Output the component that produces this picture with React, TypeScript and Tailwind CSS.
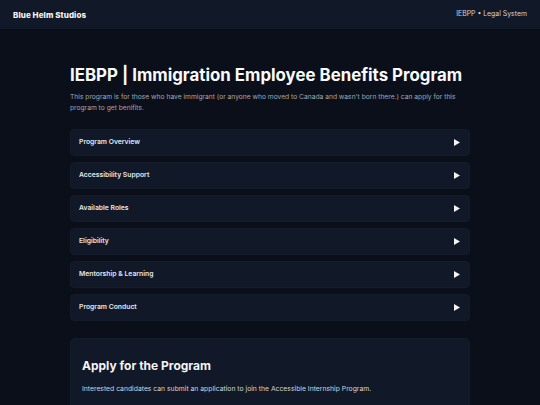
import React from "react";

const items = [
  "Program Overview",
  "Accessibility Support",
  "Available Roles",
  "Eligibility",
  "Mentorship & Learning",
  "Program Conduct",
];

export default function App() {
  return (
    <div
      className="min-h-[405px] bg-[#0b0f19] text-white"
      style={{ fontFamily: "Inter, 'Noto Sans', sans-serif" }}
    >
      <header className="h-[30px] bg-[#111827] border-b border-[#0a0d16] flex items-center justify-between px-[13px]">
        <div className="text-[8px] font-extrabold text-[#f3f4f6] tracking-[0.01em]">Blue Helm Studios</div>
        <div className="text-[6.9px] text-[#d1d5db]">IEBPP • Legal System</div>
      </header>
      <main className="w-[400px] mx-auto pt-[34px]">
        <h1 className="text-[16.85px] leading-[22px] font-bold text-[#f9fafb]">
          IEBPP | Immigration Employee Benefits Program
        </h1>
        <p className="mt-[6px] text-[6.7px] leading-[11px] text-[#a3a8b3] pr-[6px]">
          This program is for those who have immigrant (or anyone who moved to Canada and wasn't born there.) can apply for this program to get benifits.
        </p>
        <div className="mt-[15px] flex flex-col gap-[6px]">
          {items.map((t) => (
            <div
              key={t}
              className="h-[27px] rounded-[4px] bg-[#111827] border border-[#141b2b] flex items-center justify-between pl-[8px] pr-[9px]"
            >
              <span className="text-[6.8px] font-semibold text-[#e5e7eb]">{t}</span>
              <svg width="6" height="7" viewBox="0 0 6 7">
                <path d="M0 0 L6 3.5 L0 7 Z" fill="#f3f4f6" />
              </svg>
            </div>
          ))}
        </div>
        <section className="mt-[17px] rounded-[5px] bg-[#111827] border border-[#141b2b] px-[11px] pt-[19px] pb-[20px]">
          <h2 className="text-[12px] leading-[16px] font-bold text-[#f3f4f6]">Apply for the Program</h2>
          <p className="mt-[10px] text-[6.8px] leading-[10px] text-[#d1d5db]">
            Interested candidates can submit an application to join the Accessible Internship Program.
          </p>
        </section>
      </main>
    </div>
  );
}
